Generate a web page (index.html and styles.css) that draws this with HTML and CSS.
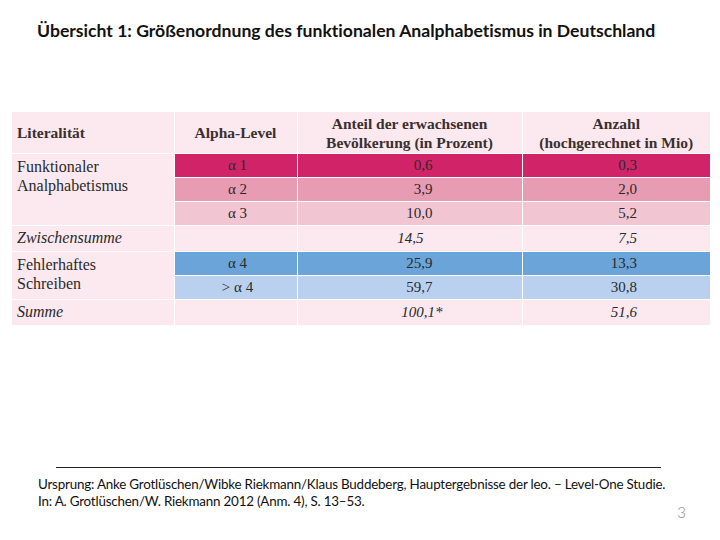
FILE: index.html
```html
<!DOCTYPE html>
<html lang="de">
<head>
<meta charset="utf-8">
<title>Übersicht 1</title>
<link rel="stylesheet" href="styles.css">
</head>
<body>
<div class="slide">
  <h1 class="title">Übersicht 1: Größenordnung des funktionalen Analphabetismus in Deutschland</h1>
  <table class="data">
    <colgroup>
      <col class="c1"><col class="c2"><col class="c3"><col class="c4">
    </colgroup>
    <thead>
      <tr>
        <th class="lit">Literalität</th>
        <th>Alpha-Level</th>
        <th>Anteil der erwachsenen<br>Bevölkerung (in Prozent)</th>
        <th>Anzahl<br>(hochgerechnet in Mio)</th>
      </tr>
    </thead>
    <tbody>
      <tr class="a1">
        <td class="lit" rowspan="3">Funktionaler<br>Analphabetismus</td>
        <td class="lvl">α 1</td><td class="n3">0,6</td><td class="n4">0,3</td>
      </tr>
      <tr class="a2"><td class="lvl">α 2</td><td class="n3">3,9</td><td class="n4">2,0</td></tr>
      <tr class="a3"><td class="lvl">α 3</td><td class="n3">10,0</td><td class="n4">5,2</td></tr>
      <tr class="sum">
        <td class="lit">Zwischensumme</td><td></td><td class="n3 it1">14,5</td><td class="n4">7,5</td>
      </tr>
      <tr class="a4">
        <td class="lit plain" rowspan="2">Fehlerhaftes<br>Schreiben</td>
        <td class="lvl">α 4</td><td class="n3">25,9</td><td class="n4">13,3</td>
      </tr>
      <tr class="a5"><td class="lvl">&gt; α 4</td><td class="n3">59,7</td><td class="n4">30,8</td></tr>
      <tr class="sum">
        <td class="lit">Summe</td><td></td><td class="n3 it2">100,1*</td><td class="n4">51,6</td>
      </tr>
    </tbody>
  </table>
  <div class="spacer"></div>
  <footer class="foot">
    <hr class="rule">
    <p class="src">Ursprung: Anke Grotlüschen/Wibke Riekmann/Klaus Buddeberg, Hauptergebnisse der leo. – Level-One Studie.<br>In: A. Grotlüschen/W. Riekmann 2012 (Anm. 4), S. 13–53.</p>
    <div class="page">3</div>
  </footer>
</div>
</body>
</html>
```

FILE: styles.css
```css
html, body {
  margin: 0;
  padding: 0;
  background: #ffffff;
}

.slide {
  width: 720px;
  height: 540px;
  display: flex;
  flex-direction: column;
  box-sizing: border-box;
  overflow: hidden;
  font-variant-ligatures: none;
}

.title {
  margin: 0;
  height: 112px;
  box-sizing: border-box;
  padding: 19px 0 0 37px;
  font-family: "Lato", "Liberation Sans", sans-serif;
  font-weight: bold;
  font-size: 17.6px;
  line-height: 24px;
  color: #111111;
  letter-spacing: 0;
}

.data {
  margin-left: 12px;
  width: 698px;
  table-layout: fixed;
  border-collapse: collapse;
  background: #fbe9ef;
  font-family: "Liberation Serif", "DejaVu Serif", serif;
  font-size: 16px;
  color: #2a2a2a;
}

.c1 { width: 162px; }
.c2 { width: 123px; }
.c3 { width: 225px; }
.c4 { width: 188px; }

.data th {
  height: 41px;
  padding: 0;
  font-weight: bold;
  font-size: 15.5px;
  line-height: 19px;
  text-align: center;
  color: #3a3030;
  border-bottom: 1px solid #ffffff;
  border-left: 1px solid #ffffff;
  vertical-align: middle;
}

.data th.lit {
  text-align: left;
  padding-left: 5px;
  border-left: none;
}

.data td {
  height: 23px;
  padding: 0;
  line-height: 19px;
  border-bottom: 1px solid #ffffff;
  border-left: 1px solid #ffffff;
  vertical-align: middle;
}

.data td.lit {
  padding: 2px 0 0 5px;
  vertical-align: top;
  border-left: none;
  font-style: italic;
}

.data td.lit[rowspan] {
  font-style: normal;
  line-height: 19px;
  padding-top: 3px;
}

.data td.plain {
  line-height: 20px;
}

.data tbody tr:last-child td {
  border-bottom: none;
}

.lvl {
  text-align: center;
  font-size: 15px;
  padding-left: 4px !important;
}

.n3 {
  text-align: right;
  padding-right: 89px !important;
  font-size: 15px;
}

.n4 {
  text-align: right;
  padding-right: 73px !important;
  font-size: 15px;
}

.sum td { font-style: italic; }

.it1 { padding-right: 98px !important; }
.it2 { padding-right: 79px !important; }

.a1 .lvl, .a1 .n3, .a1 .n4 { background: #d12468; }
.a2 .lvl, .a2 .n3, .a2 .n4 { background: #e79cb4; }
.a3 .lvl, .a3 .n3, .a3 .n4 { background: #f2c5d3; }
.a4 .lvl, .a4 .n3, .a4 .n4 { background: #6ba4d8; }
.a5 .lvl, .a5 .n3, .a5 .n4 { background: #b9d1ef; }

.spacer {
  flex: 1;
}

.foot {
  height: 66px;
  position: relative;
  flex: none;
  margin-bottom: 7px;
}

.rule {
  margin: 0 0 0 56px;
  width: 605px;
  border: none;
  border-top: 1px solid #222222;
  height: 0;
}

.src {
  margin: 8px 0 0 38px;
  font-family: "Lato", "Liberation Sans", sans-serif;
  font-size: 13.4px;
  line-height: 17px;
  color: #111111;
  letter-spacing: -0.2px;
}

.page {
  position: absolute;
  right: 34px;
  bottom: 12px;
  font-family: "Lato", "Liberation Sans", sans-serif;
  font-weight: 300;
  font-size: 15px;
  color: #8a8a8a;
}
```
